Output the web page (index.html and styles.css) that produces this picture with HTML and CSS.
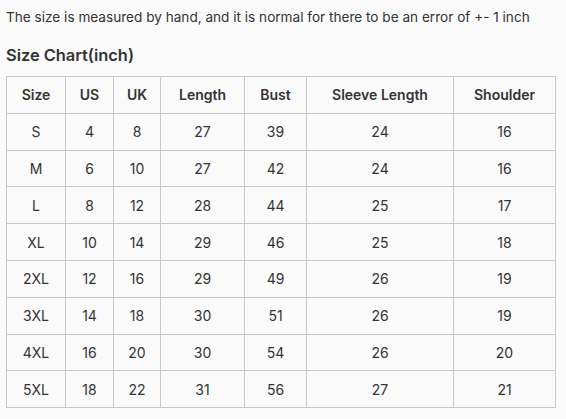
FILE: index.html
```html
<!DOCTYPE html>
<html>
<head>
<meta charset="utf-8">
<link rel="stylesheet" href="styles.css">
</head>
<body>
<p class="note">The size is measured by hand, and it is normal for there to be an error of +- 1 inch</p>
<h2 class="title">Size Chart(inch)</h2>
<table class="chart">
<colgroup>
<col class="c1"><col class="c2"><col class="c3"><col class="c4"><col class="c5"><col class="c6"><col class="c7">
</colgroup>
<thead>
<tr><th>Size</th><th>US</th><th>UK</th><th>Length</th><th>Bust</th><th>Sleeve Length</th><th>Shoulder</th></tr>
</thead>
<tbody>
<tr><td>S</td><td>4</td><td>8</td><td>27</td><td>39</td><td>24</td><td>16</td></tr>
<tr><td>M</td><td>6</td><td>10</td><td>27</td><td>42</td><td>24</td><td>16</td></tr>
<tr><td>L</td><td>8</td><td>12</td><td>28</td><td>44</td><td>25</td><td>17</td></tr>
<tr><td>XL</td><td>10</td><td>14</td><td>29</td><td>46</td><td>25</td><td>18</td></tr>
<tr><td>2XL</td><td>12</td><td>16</td><td>29</td><td>49</td><td>26</td><td>19</td></tr>
<tr><td>3XL</td><td>14</td><td>18</td><td>30</td><td>51</td><td>26</td><td>19</td></tr>
<tr><td>4XL</td><td>16</td><td>20</td><td>30</td><td>54</td><td>26</td><td>20</td></tr>
<tr><td>5XL</td><td>18</td><td>22</td><td>31</td><td>56</td><td>27</td><td>21</td></tr>
</tbody>
</table>
</body>
</html>
```
FILE: styles.css
```css
html, body {
  margin: 0;
  background: #fafafa;
}
body {
  padding: 7px 6px 0 6px;
  font-family: Inter, "Liberation Sans", sans-serif;
  color: #333;
}
.note {
  margin: 0;
  font-size: 13.6px;
  line-height: 20px;
}
.title {
  margin: 17px 0 0 0;
  font-size: 16.4px;
  line-height: 22px;
  font-weight: 600;
}
.chart {
  margin-top: 10px;
  border-collapse: collapse;
  table-layout: fixed;
  width: 549px;
  font-size: 14px;
}
.c1 { width: 59px; }
.c2 { width: 48px; }
.c3 { width: 47px; }
.c4 { width: 84px; }
.c5 { width: 62px; }
.c6 { width: 147px; }
.c7 { width: 102px; }
.chart th, .chart td {
  border: 1px solid #c8c8c8;
  text-align: center;
  vertical-align: middle;
  height: 35.8px;
  padding: 0;
}
.chart th {
  font-weight: 600;
}
.chart td {
  font-weight: 400;
}
```
